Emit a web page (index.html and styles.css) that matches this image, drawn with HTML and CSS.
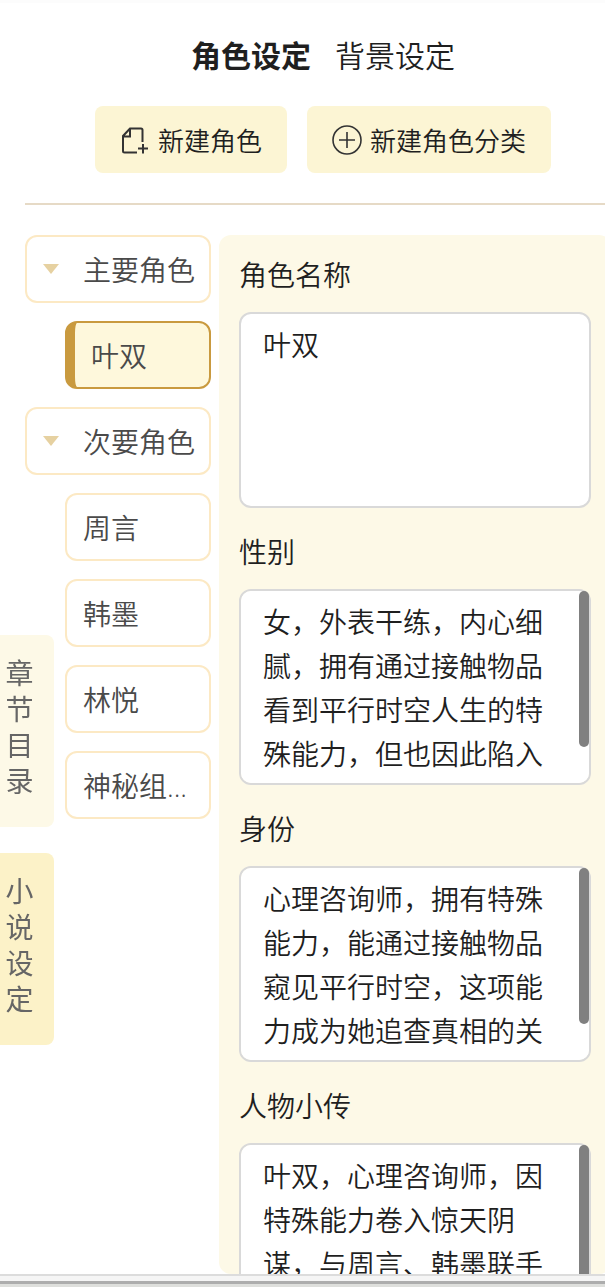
FILE: index.html
```
<!DOCTYPE html>
<html lang="zh-CN">
<head>
  <meta charset="UTF-8">
  <meta name="viewport" content="width=device-width, initial-scale=1.0">
  <title>角色设定</title>
  <link rel="stylesheet" href="styles.css">
</head>
<body>
  <div class="page">
    <header class="header">
      <nav class="tabs">
        <button type="button" class="tab active">角色设定</button>
        <button type="button" class="tab">背景设定</button>
      </nav>
      <div class="actions">
        <button type="button" class="action-btn">
          <svg class="icon" viewBox="0 0 30 30" aria-hidden="true">
            <path d="M17 27.500H4.500a1.500 1.500 0 0 1-1.500-1.500V11L10 3.500H21a1.500 1.500 0 0 1 1.500 1.500V17M3 11.500H10V4M23 19V28.500M18 23.500H28" />
          </svg>
          新建角色
        </button>
        <button type="button" class="action-btn">
          <svg class="icon thin" viewBox="0 0 30 30" aria-hidden="true">
            <circle cx="15" cy="15" r="14" />
            <path d="M15 7V23M7 15H23" />
          </svg>
          新建角色分类
        </button>
      </div>
    </header>

    <main class="content">
      <div class="tree">
        <button type="button" class="node group"><span class="caret"></span>主要角色</button>
        <button type="button" class="node child active">叶双</button>
        <button type="button" class="node group"><span class="caret"></span>次要角色</button>
        <button type="button" class="node child">周言</button>
        <button type="button" class="node child">韩墨</button>
        <button type="button" class="node child">林悦</button>
        <button type="button" class="node child">神秘组...</button>
      </div>

      <form class="panel">
        <div class="field">
          <label for="name">角色名称</label>
          <div class="box">
            <textarea id="name">叶双</textarea>
          </div>
        </div>
        <div class="field">
          <label for="gender">性别</label>
          <div class="box">
            <textarea id="gender">女，外表干练，内心细腻，拥有通过接触物品看到平行时空人生的特殊能力，但也因此陷入危险之中。</textarea>
            <span class="thumb"></span>
          </div>
        </div>
        <div class="field">
          <label for="identity">身份</label>
          <div class="box">
            <textarea id="identity">心理咨询师，拥有特殊能力，能通过接触物品窥见平行时空，这项能力成为她追查真相的关键。</textarea>
            <span class="thumb"></span>
          </div>
        </div>
        <div class="field">
          <label for="bio">人物小传</label>
          <div class="box">
            <textarea id="bio">叶双，心理咨询师，因特殊能力卷入惊天阴谋，与周言、韩墨联手追查真相，逐渐揭开神秘组织的秘密。</textarea>
            <span class="thumb"></span>
          </div>
        </div>
      </form>
    </main>

    <footer class="status-bar"></footer>
  </div>

  <!-- vertical tabs stuck to the left edge -->
  <nav class="side-tabs">
    <button type="button" class="side-tab">章节目录</button>
    <button type="button" class="side-tab active">小说设定</button>
  </nav>
</body>
</html>
```
FILE: styles.css
```
* {
  box-sizing: border-box;
}
body {
  margin: 0;
  background: #fff;
  color: #1f1f1f;
  font-family: "Open Sans", "Noto Sans CJK SC", sans-serif;
  font-size: 28px;
  font-weight: 350;
}
button, textarea {
  font: inherit;
  color: inherit;
}
button {
  margin: 0;
  padding: 0;
  border: none;
  background: none;
  cursor: pointer;
}
.page {
  display: flex;
  flex-direction: column;
  height: 100vh;
  overflow: hidden;
  border-top: 3px solid #fcfcfc;
}
.header {
  display: flex;
  flex-direction: column;
  align-items: center;
  gap: 28px;
  margin: 0 -16px 0 25px;
  padding: 31px 0 30px;
  border-bottom: 2px solid #e6dac6;
}
.tabs {
  display: flex;
  gap: 24px;
}
.tab {
  font-size: 30px;
  line-height: 44px;
}
.tab.active {
  font-weight: 700;
}
.actions {
  display: flex;
  gap: 20px;
}
.action-btn {
  display: flex;
  align-items: center;
  gap: 8px;
  height: 67px;
  padding: 0 25px;
  border-radius: 8px;
  background: #fcf5d4;
  font-size: 26px;
  white-space: nowrap;
}
.icon {
  width: 30px;
  height: 30px;
  fill: none;
  stroke: #333;
  stroke-width: 2;
}
.icon.thin {
  stroke-width: 1.6;
}

/* tree + form */
.content {
  display: flex;
  flex: 1;
  gap: 8px;
  min-height: 0;
  margin: 30px -6px 0 25px;
}
.tree {
  display: flex;
  flex-direction: column;
  flex: none;
  gap: 18px;
  width: 186px;
}
.node {
  flex: none;
  height: 68px;
  padding: 0 12px 0 16px;
  border: 2px solid #fce9c4;
  border-radius: 12px;
  background: #fff;
  color: #4a4a4a;
  text-align: left;
  white-space: nowrap;
}
.node.group {
  display: flex;
  align-items: center;
  gap: 24px;
}
.node.child {
  margin-left: 40px;
}
.node.active {
  border-color: #c99a3f;
  border-left-width: 10px;
  background: #fef8dc;
}
.caret {
  border: 8px solid transparent;
  border-top: 10px solid #e6d1a1;
  border-bottom: none;
}
.panel {
  flex: 1;
  min-width: 0;
  padding: 20px;
  border-radius: 12px;
  background: #fdf9e7;
  overflow: hidden;
}
.field {
  display: flex;
  flex-direction: column;
  gap: 17px;
  margin-bottom: 24px;
}
.field label {
  line-height: 40px;
}
.box {
  position: relative;
}
.field textarea {
  display: block;
  width: 100%;
  height: 196px;
  padding: 9px 22px;
  border: 2px solid #d9d9d9;
  border-radius: 12px;
  outline: none;
  background: #fff;
  line-height: 44px;
  resize: none;
  scrollbar-width: none;
}
/* scrollbar thumb drawn over the textarea edge */
.thumb {
  position: absolute;
  top: 2px;
  right: 2px;
  width: 10px;
  height: 156px;
  border-radius: 5px;
  background: #808080;
}
.status-bar {
  flex: none;
  height: 13px;
  border-top: 2px solid #dcdcdc;
  border-bottom: 3px solid #dedfdc;
  background: linear-gradient(#f5f5f5 5px, #adadad 5px);
}

.side-tabs {
  position: fixed;
  left: 0;
  bottom: 242px;
  display: flex;
  flex-direction: column;
  gap: 26px;
}
.side-tab {
  width: 54px;
  padding: 20px 20px 28px 5px;
  border-radius: 0 8px 8px 0;
  background: #fdf9e7;
  color: #666;
  font-weight: 400;
  line-height: 36px;
  word-break: break-all;
}
.side-tab.active {
  background: #fcf2c8;
}
```
